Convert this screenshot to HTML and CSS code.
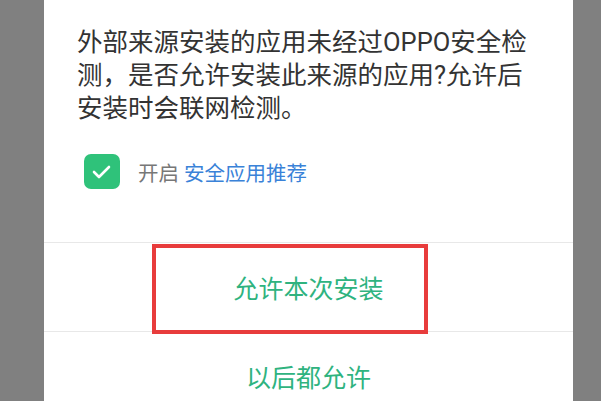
FILE: index.html
```html
<!DOCTYPE html>
<html lang="zh-CN">
<head>
    <meta charset="UTF-8">
    <title>安装确认</title>
    <link rel="stylesheet" href="styles.css">
</head>
<body>
    <div class="dialog">
        <div class="dialog-body">
            <p class="message">外部来源安装的应用未经过OPPO安全检测，是否允许安装此来源的应用?允许后安装时会联网检测。</p>
            <div class="option">
                <span class="checkbox">
                    <svg width="36" height="35" viewBox="0 0 36 35"><path d="M10 18l5 5 10-10" fill="none" stroke="#fff" stroke-width="2.6" stroke-linecap="round" stroke-linejoin="round"/></svg>
                </span>
                <span class="option-label">开启 <a href="#">安全应用推荐</a></span>
            </div>
        </div>
        <div class="actions">
            <button class="action">允许本次安装</button>
            <button class="action">以后都允许</button>
        </div>
        <div class="highlight"></div>
    </div>
</body>
</html>
```

FILE: styles.css
```css
/* 弹窗 */
body { margin: 0; background-color: #808080; font-family: Roboto, "Noto Sans CJK SC", sans-serif; height: 401px; overflow: hidden; }
.dialog { position: relative; margin-left: 44px; width: 529px; height: 401px; background-color: #fff; }
.dialog-body { padding: 26px 33px 0 33px; height: 216px; }
.message { margin: 0; font-size: 25.5px; line-height: 33px; color: #333; }
.option { display: flex; align-items: center; gap: 18px; margin-top: 29px; margin-left: 7px; }
.checkbox { width: 36px; height: 35px; border-radius: 7px; background-color: #2fc27a; display: flex; }
.option-label { font-size: 20.5px; color: #777; }
.option-label a { color: #3a82d8; text-decoration: none; }
.actions { display: flex; flex-direction: column; }
.action { height: 89px; border: none; border-top: 1px solid #e8e8e8; background: none; font-family: inherit; font-size: 25px; color: #2fb37f; padding: 0; }
.highlight { position: absolute; left: 108px; top: 244px; width: 268px; height: 82px; border: 4px solid #e83c3c; }
```
